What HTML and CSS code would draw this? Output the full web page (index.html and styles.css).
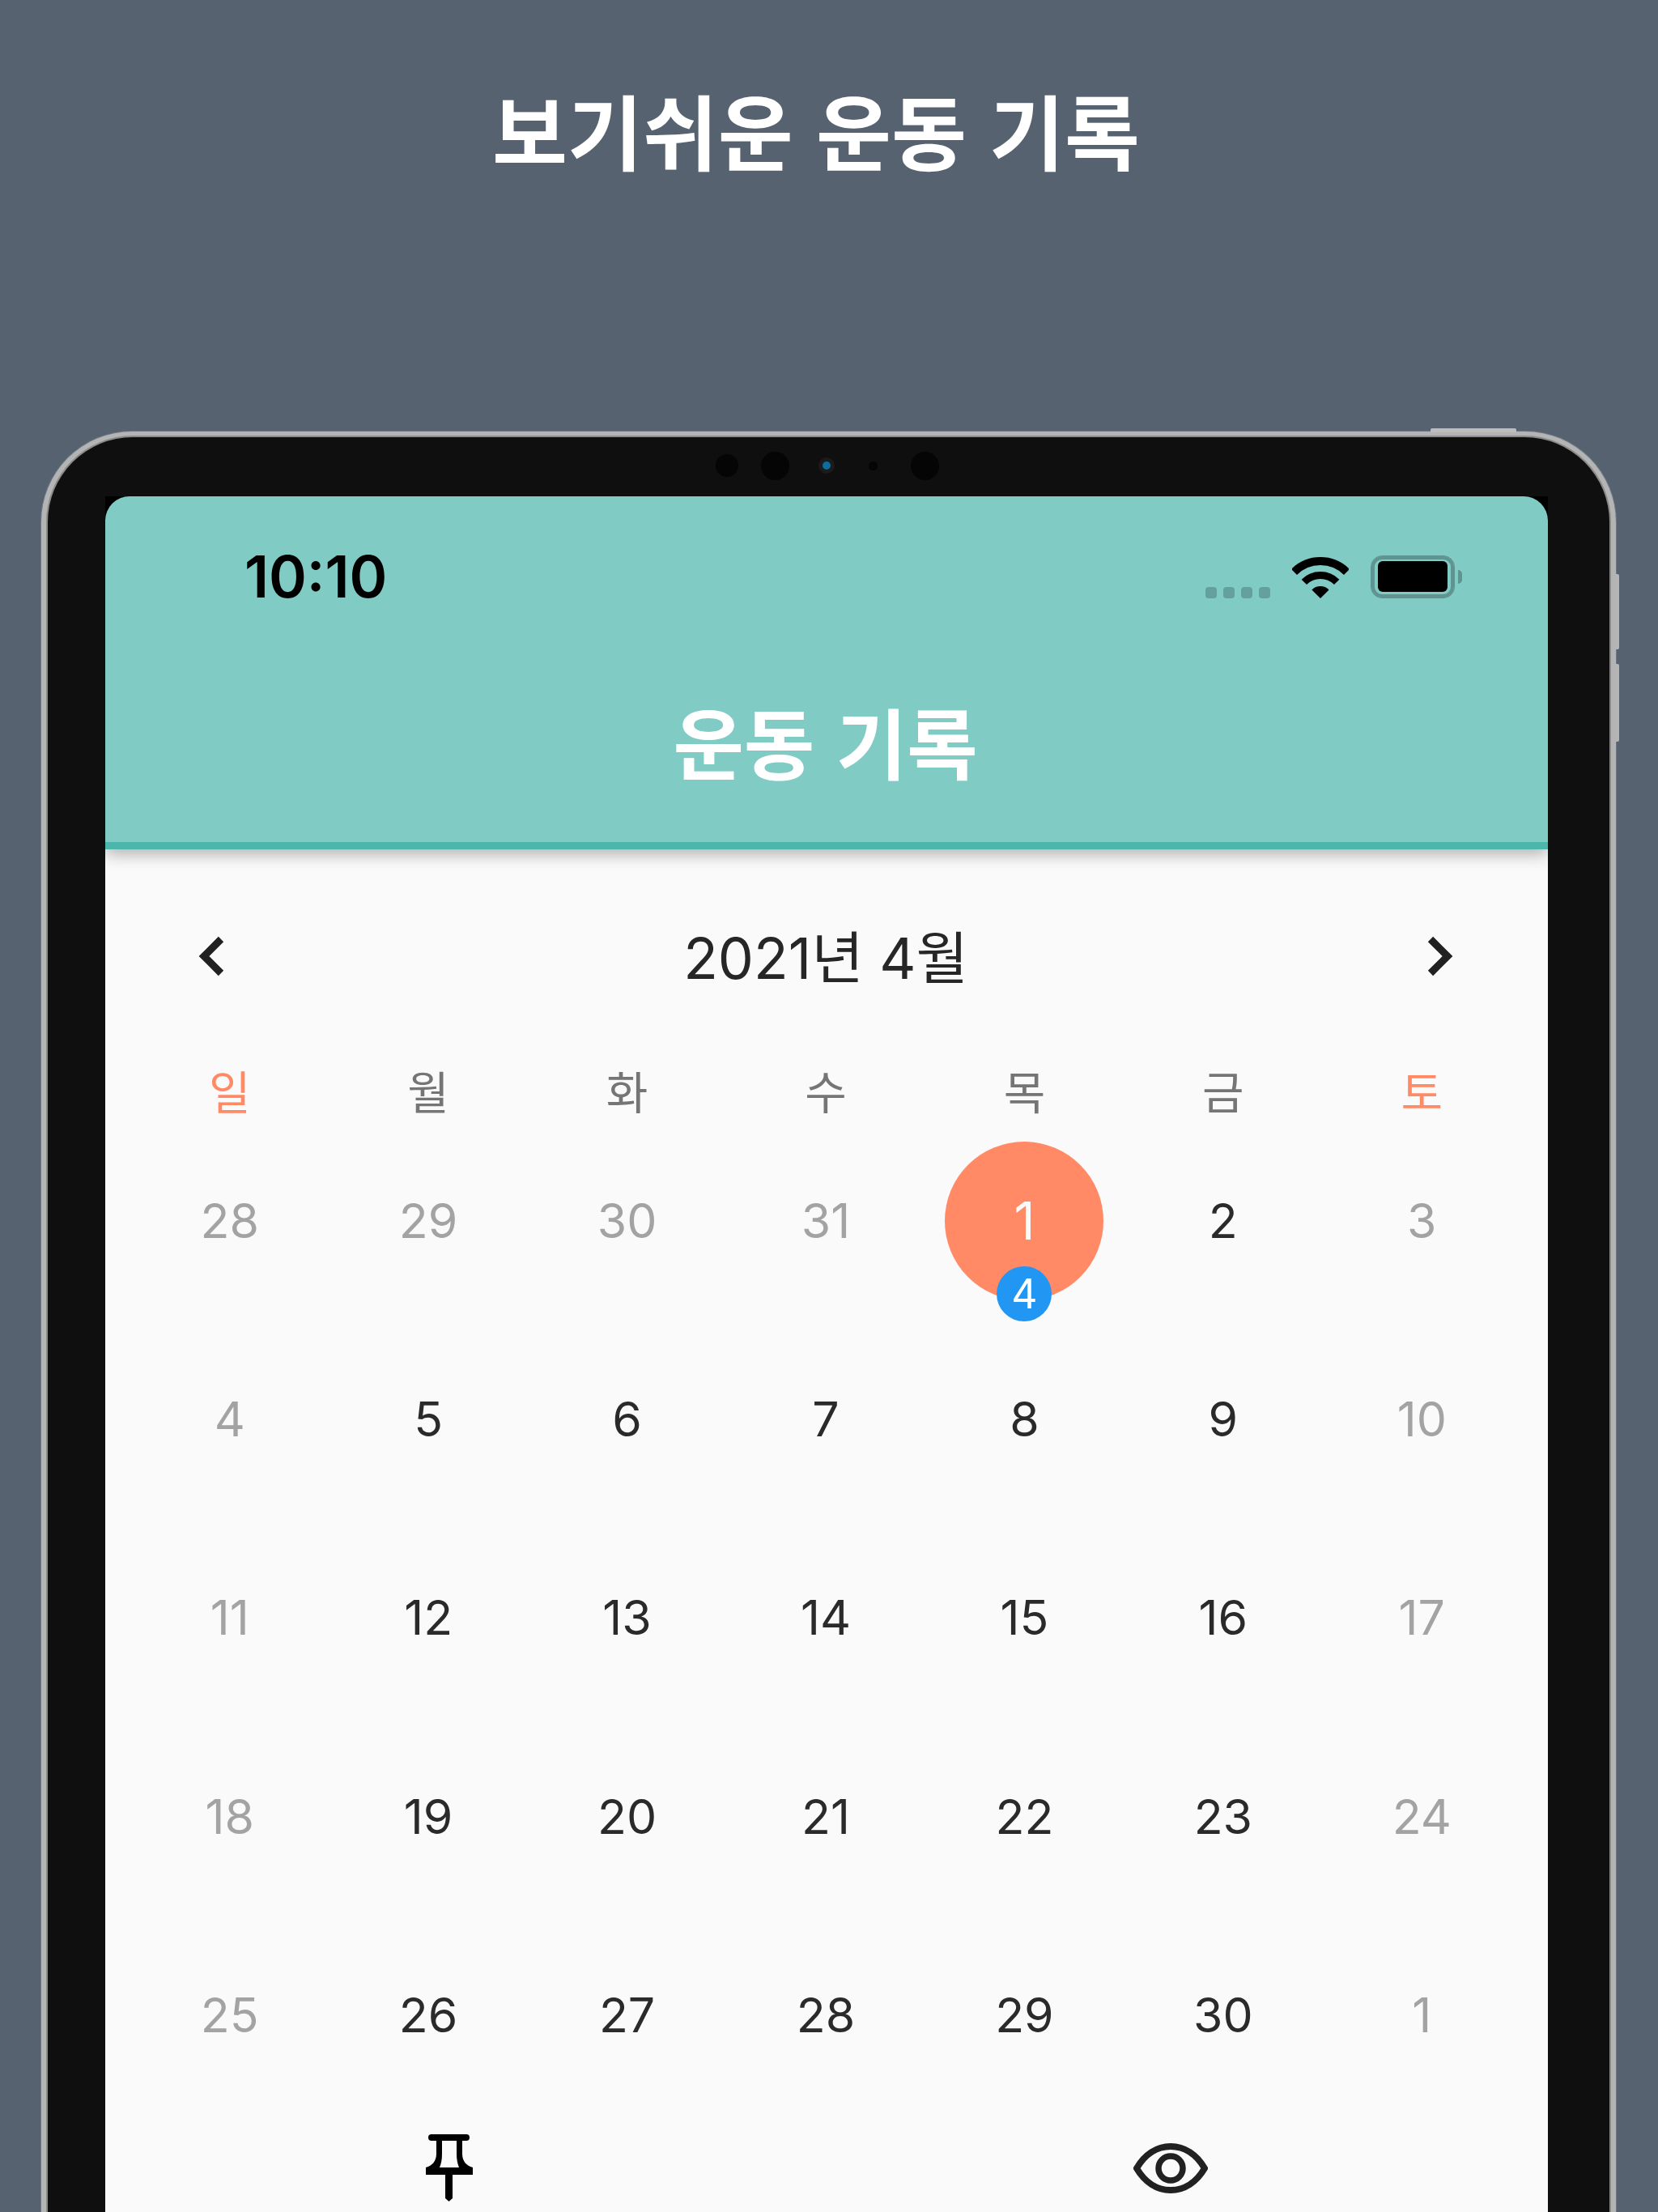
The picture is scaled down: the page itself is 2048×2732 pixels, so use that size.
FILE: index.html
```html
<!DOCTYPE html>
<html lang="ko">
  <head>
    <meta name="viewport" content="width=device-width,initial-scale=1.0" />
    <title>운동 기록</title>
    <link rel="stylesheet" href="styles.css">
  </head>

  <body>
    <h1 class="headline">보기쉬운 운동 기록</h1>

    <div class="device">
      <span class="top-button"></span>
      <span class="side-button side-button-a"></span>
      <span class="side-button side-button-b"></span>

      <div class="bezel">
        <div class="sensors">
          <span class="sensor sensor-mid"></span>
          <span class="sensor sensor-big"></span>
          <span class="sensor sensor-led"></span>
          <span class="sensor sensor-tiny"></span>
          <span class="sensor sensor-big"></span>
        </div>

        <div class="screen">
          <header class="app-header">
            <div class="status-bar">
              <span class="clock">10:10</span>
              <div class="status-icons">
                <div class="signal"><i></i><i></i><i></i><i></i></div>
                <svg class="wifi" width="70" height="51" viewBox="0 0 70 51">
                  <path d="M2.5 18.5 A46 46 0 0 1 67.5 18.5" fill="none" stroke="#000" stroke-width="10"/>
                  <path d="M14.85 30.85 A28.5 28.5 0 0 1 55.15 30.85" fill="none" stroke="#000" stroke-width="9"/>
                  <path d="M35 51 L24.4 40.4 A15 15 0 0 1 45.6 40.4 Z" fill="#000"/>
                </svg>
                <div class="battery"><span class="battery-fill"></span></div>
                <span class="battery-tip"></span>
              </div>
            </div>
            <h2 class="app-title">운동 기록</h2>
          </header>

          <main class="calendar">
            <div class="month-bar">
              <svg class="chevron" width="40" height="56" viewBox="0 0 40 56">
                <path d="M31 7 L10 28 L31 49" fill="none" stroke="#212121" stroke-width="9"/>
              </svg>
              <span class="month-label">2021년 4월</span>
              <svg class="chevron" width="40" height="56" viewBox="0 0 40 56">
                <path d="M9 7 L30 28 L9 49" fill="none" stroke="#212121" stroke-width="9"/>
              </svg>
            </div>

            <div class="weekdays">
              <span class="accent">일</span>
              <span>월</span>
              <span>화</span>
              <span>수</span>
              <span>목</span>
              <span>금</span>
              <span class="accent">토</span>
            </div>

            <div class="days">
              <span class="day muted">28</span>
              <span class="day muted">29</span>
              <span class="day muted">30</span>
              <span class="day muted">31</span>
              <span class="day selected">
                <span class="day-circle">1</span>
                <span class="badge">4</span>
              </span>
              <span class="day">2</span>
              <span class="day muted">3</span>

              <span class="day muted">4</span>
              <span class="day">5</span>
              <span class="day">6</span>
              <span class="day">7</span>
              <span class="day">8</span>
              <span class="day">9</span>
              <span class="day muted">10</span>

              <span class="day muted">11</span>
              <span class="day">12</span>
              <span class="day">13</span>
              <span class="day">14</span>
              <span class="day">15</span>
              <span class="day">16</span>
              <span class="day muted">17</span>

              <span class="day muted">18</span>
              <span class="day">19</span>
              <span class="day">20</span>
              <span class="day">21</span>
              <span class="day">22</span>
              <span class="day">23</span>
              <span class="day muted">24</span>

              <span class="day muted">25</span>
              <span class="day">26</span>
              <span class="day">27</span>
              <span class="day">28</span>
              <span class="day">29</span>
              <span class="day">30</span>
              <span class="day muted">1</span>
            </div>

            <nav class="bottom-tabs">
              <svg class="pin" width="58" height="83" viewBox="0 0 58 83">
                <path d="M7 0 H50 A4 4 0 0 1 50 8 H45 V24 C45 33 50 39 58 41 V50 H33 V79 L28.5 83 L24 79 V50 H0 V41 C8 39 13 33 13 24 V8 H7 A4 4 0 0 1 7 0 Z M20 8 V24 C20 31 19 36 17 41 H41 C39 36 38 31 38 24 V8 Z" fill="#000" fill-rule="evenodd"/>
              </svg>
              <svg class="eye" width="92" height="64" viewBox="0 0 92 64">
                <path d="M4 32 C14 15 29 5 46 5 C63 5 78 15 88 32 C78 49 63 59 46 59 C29 59 14 49 4 32 Z" fill="none" stroke="#212121" stroke-width="8"/>
                <circle cx="46" cy="32" r="15" fill="none" stroke="#212121" stroke-width="7.5"/>
              </svg>
            </nav>
          </main>
        </div>
      </div>
    </div>
  </body>
</html>
```

FILE: styles.css
```css
* {
  box-sizing: border-box;
}

html,
body {
  height: 2732px;
  overflow: hidden;
}

body {
  margin: 0;
  background: #566270;
  font-family: Inter, "Noto Sans CJK KR", sans-serif;
}

.headline {
  margin: 0;
  height: 533px;
  padding: 91px 32px 0 0;
  text-align: center;
  color: #fff;
  font-family: "Noto Sans CJK KR", sans-serif;
  font-size: 101px;
  font-weight: 700;
  line-height: 136px;
}

.device {
  position: relative;
  width: 1945px;
  height: 2199px;
  margin-left: 51px;
  padding: 7px 8px 0;
  border-radius: 112px 112px 0 0;
  background: #b4b4b4;
  box-shadow: 0 0 0 1px #6f7a86;
}

.top-button {
  position: absolute;
  top: -4px;
  left: 1716px;
  width: 106px;
  height: 5px;
  border-radius: 2px 2px 0 0;
  background: #bdbdbd;
}

.side-button {
  position: absolute;
  left: 100%;
  width: 4px;
  border-radius: 0 2px 2px 0;
  background: #b5b5b5;
}

.side-button-a {
  top: 176px;
  height: 93px;
}

.side-button-b {
  top: 287px;
  height: 96px;
}

.bezel {
  height: 100%;
  padding: 73px 76px 0 71px;
  border-radius: 105px 105px 0 0;
  background: #0f0f0f;
  box-shadow: 0 0 0 2px #8a8a8a;
}

.sensors {
  position: absolute;
  top: 7px;
  left: 833px;
  display: flex;
  align-items: center;
  height: 70px;
}

.sensor {
  border-radius: 50%;
  background: #050505;
}

.sensor-mid {
  width: 28px;
  height: 28px;
  margin-right: 28px;
}

.sensor-big {
  width: 35px;
  height: 35px;
}

.sensor-led {
  width: 10px;
  height: 10px;
  margin: 0 47px 0 41px;
  background: #0f6d9e;
  box-shadow: 0 0 0 5px #1b1b1b;
}

.sensor-tiny {
  width: 11px;
  height: 11px;
  margin-right: 41px;
}

.screen {
  display: flex;
  flex-direction: column;
  height: 100%;
  overflow: hidden;
  background: #000;
}

.app-header {
  position: relative;
  z-index: 1;
  flex: none;
  height: 436px;
  border-radius: 30px 30px 0 0;
  border-bottom: 9px solid #4db6ac;
  background: #80cbc4;
  box-shadow: 0 6px 20px rgba(0, 0, 0, 0.3);
}

.status-bar {
  display: flex;
  align-items: center;
  justify-content: space-between;
  height: 198px;
  padding: 0 106px 0 172px;
}

.clock {
  color: #000;
  font-size: 71px;
  font-weight: 600;
}

.status-icons {
  display: flex;
  align-items: flex-end;
}

.signal {
  display: flex;
  gap: 8px;
  margin-right: 27px;
}

.signal i {
  width: 14px;
  height: 14px;
  border-radius: 4px;
  background: #65a19c;
}

.wifi {
  margin-right: 27px;
}

.battery {
  width: 104px;
  height: 53px;
  padding: 6px 8px 7px;
  border: 1px solid #5f9490;
  border-radius: 14px;
  box-shadow: inset 0 0 0 4px #5f9490;
}

.battery-fill {
  display: block;
  height: 100%;
  border-radius: 6px;
  background: #000;
}

.battery-tip {
  align-self: center;
  width: 5px;
  height: 17px;
  margin-left: 4px;
  border-radius: 0 6px 6px 0;
  background: #5f9490;
}

.app-title {
  margin: 0;
  padding: 46px 3px 0 0;
  text-align: center;
  color: #fff;
  font-family: "Noto Sans CJK KR", sans-serif;
  font-size: 95px;
  font-weight: 700;
  line-height: 116px;
}

.calendar {
  flex: 1;
  padding: 0 33px 0 31px;
  background: #fafafa;
}

.month-bar {
  display: flex;
  align-items: center;
  justify-content: space-between;
  height: 264px;
  padding: 0 81px;
}

.month-label {
  margin-bottom: 6px;
  color: #262626;
  font-size: 70px;
}

.weekdays {
  display: grid;
  grid-template-columns: repeat(7, 1fr);
  height: 70px;
  padding-top: 2px;
  text-align: center;
  color: #757575;
  font-size: 56px;
  line-height: 70px;
}

.weekdays .accent {
  color: #ff8a65;
}

.days {
  display: grid;
  grid-template-columns: repeat(7, 1fr);
  grid-auto-rows: 245.2px;
  margin-top: 2px;
}

.day {
  display: flex;
  align-items: center;
  justify-content: center;
  color: #2a2a2a;
  font-size: 59px;
}

.day.muted {
  color: #a3a3a3;
}

.selected {
  position: relative;
}

.day-circle {
  display: flex;
  align-items: center;
  justify-content: center;
  width: 196px;
  height: 196px;
  border-radius: 50%;
  background: #ff8a65;
  color: #fafafa;
  font-size: 64px;
}

.badge {
  position: absolute;
  left: 50%;
  top: 179px;
  display: flex;
  align-items: center;
  justify-content: center;
  width: 68px;
  height: 68px;
  margin-left: -34px;
  border-radius: 50%;
  background: #2196f3;
  color: #fff;
  font-size: 50px;
}

.bottom-tabs {
  display: grid;
  grid-template-columns: 891px 891px;
  align-items: center;
  justify-items: center;
  height: 134px;
  margin-left: -52px;
}
```
